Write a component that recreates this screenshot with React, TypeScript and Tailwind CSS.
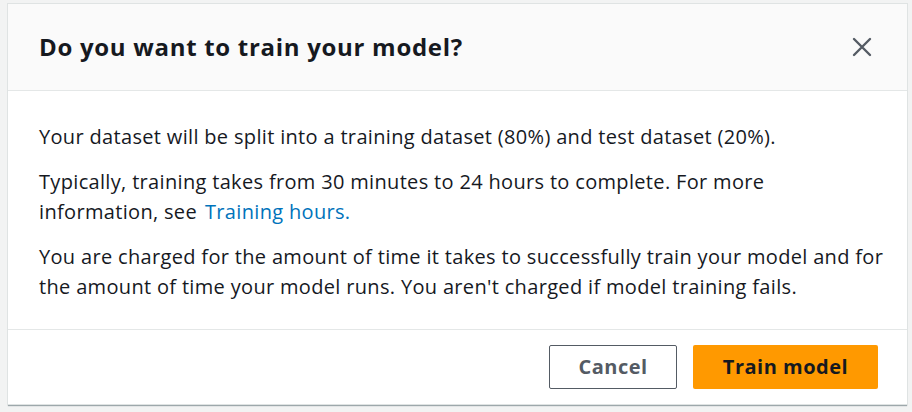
import React from "react";

export default function App() {
  return (
    <div
      className="w-[912px] h-[412px] bg-[#f2f3f3] pt-[3px] pl-[7px] overflow-hidden"
      style={{ fontFamily: '"Open Sans", "Noto Sans", sans-serif' }}
    >
      <div className="w-[901px] h-[402px] bg-white border border-[#dfe3e3] shadow-[0_2px_1px_-1px_rgba(0,28,36,0.35)] flex flex-col">
        <div className="h-[87px] bg-[#fafafa] border-b border-[#e4e7e7] flex items-center justify-between pl-[31px] pr-[34px]">
          <h1 className="text-[24px] font-bold text-[#16191f] tracking-[0.7px]">
            Do you want to train your model?
          </h1>
          <button className="w-[22px] h-[22px] flex items-center justify-center" aria-label="Close">
            <svg width="20" height="20" viewBox="0 0 20 20" fill="none">
              <path d="M2 2L18 18M18 2L2 18" stroke="#545b64" strokeWidth="2.4" strokeLinecap="round" />
            </svg>
          </button>
        </div>
        <div className="flex-1 pl-[31px] pr-[22px] pt-[31px] flex flex-col gap-[15px] text-[20px] tracking-[0.33px] leading-[30px] text-[#16191f] border-b border-[#e4e7e7]">
          <p>Your dataset will be split into a training dataset (80%) and test dataset (20%).</p>
          <p>
            Typically, training takes from 30 minutes to 24 hours to complete. For more
            <br />
            information, see
            <a className="text-[#0073bb] ml-[8px]" href="#">
              Training hours.
            </a>
          </p>
          <p>
            You are charged for the amount of time it takes to successfully train your model and for the amount of
            time your model runs. You aren't charged if model training fails.
          </p>
        </div>
        <div className="h-[74px] flex items-center justify-end gap-[16px] pr-[29px]">
          <button className="w-[128px] h-[44px] border border-[#545b64] rounded-[2px] bg-white text-[20px] tracking-[0.5px] font-bold text-[#545b64]">
            Cancel
          </button>
          <button className="w-[185px] h-[44px] rounded-[2px] bg-[#ff9900] text-[20px] tracking-[0.5px] font-bold text-[#16191f]">
            Train model
          </button>
        </div>
      </div>
    </div>
  );
}
